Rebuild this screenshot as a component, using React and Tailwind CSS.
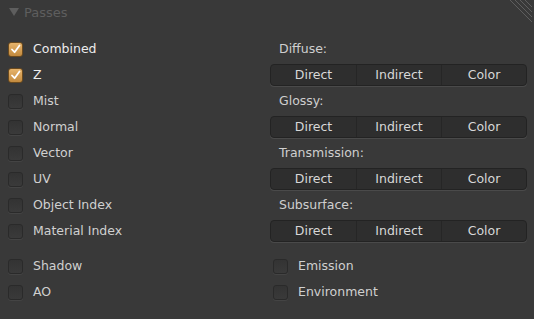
const leftTop = [
  { label: "Combined", on: true },
  { label: "Z", on: true },
  { label: "Mist" },
  { label: "Normal" },
  { label: "Vector" },
  { label: "UV" },
  { label: "Object Index" },
  { label: "Material Index" },
];

const groups = ["Diffuse:", "Glossy:", "Transmission:", "Subsurface:"];

function Check({ on }) {
  if (on) {
    return (
      <span className="flex h-[15px] w-[15px] shrink-0 items-center justify-center rounded-[3px] border border-[#6b4a1e] bg-gradient-to-b from-[#e7b46c] to-[#c28a3e]">
        <svg width="11" height="11" viewBox="0 0 11 11">
          <path d="M2 5.5 L4.6 8.2 L9.5 1.5" fill="none" stroke="#fff" strokeWidth="1.8" strokeLinecap="round" strokeLinejoin="round" />
        </svg>
      </span>
    );
  }
  return (
    <span className="h-[15px] w-[15px] shrink-0 rounded-[3px] border border-[#2a2a2a] bg-gradient-to-b from-[#333333] to-[#3a3a3a] shadow-[0_1px_0_#444]" />
  );
}

function CheckRow({ label, on }) {
  return (
    <div className="flex h-[26px] items-center gap-[10px]">
      <Check on={on} />
      <span className={on ? "text-[#ececec]" : "text-[#d0d0d0]"}>{label}</span>
    </div>
  );
}

function ButtonRow() {
  return (
    <div className="flex h-[26px] items-center">
      <div className="grid h-[22px] w-full grid-cols-3 overflow-hidden rounded-[4px] border border-[#232323] bg-[#2e2e2e] shadow-[0_1px_0_#4a4a4a]">
        {["Direct", "Indirect", "Color"].map((t, i) => (
          <div
            key={t}
            className={
              "flex items-center justify-center text-[#d8d8d8] " +
              (i > 0 ? "border-l border-[#262626]" : "")
            }
          >
            {t}
          </div>
        ))}
      </div>
    </div>
  );
}

export default function App() {
  return (
    <div className="relative h-[319px] w-[534px] overflow-hidden bg-[#393939] font-['DejaVu_Sans',sans-serif] text-[12.5px]">
      <div className="flex h-[36px] items-start gap-[5px] pl-[9px] pt-[3px] text-[13px] text-[#5e5e5e]">
        <svg width="10" height="10" viewBox="0 0 10 10" className="mt-[4px]">
          <path d="M0 1 L10 1 L5 9 Z" fill="#5e5e5e" />
        </svg>
        <span>Passes</span>
      </div>
      <svg width="26" height="22" viewBox="0 0 26 22" className="absolute right-[2px] top-0">
        <g stroke="#5e5e5e" strokeWidth="1">
          <line x1="4" y1="0" x2="26" y2="22" />
          <line x1="9" y1="0" x2="26" y2="17" />
          <line x1="14" y1="0" x2="26" y2="12" />
          <line x1="19" y1="0" x2="26" y2="7" />
        </g>
      </svg>

      <div className="grid grid-cols-[270px_257px]">
        <div className="pl-[8px]">
          {leftTop.map((r) => (
            <CheckRow key={r.label} {...r} />
          ))}
        </div>
        <div>
          {groups.map((g) => (
            <div key={g}>
              <div className="flex h-[26px] items-center pl-[9px] text-[#cfcfcf]">{g}</div>
              <ButtonRow />
            </div>
          ))}
        </div>
      </div>

      <div className="mt-[9px] grid grid-cols-[265px_257px]">
        <div className="pl-[8px]">
          <CheckRow label="Shadow" />
          <CheckRow label="AO" />
        </div>
        <div className="pl-[8px]">
          <CheckRow label="Emission" />
          <CheckRow label="Environment" />
        </div>
      </div>
    </div>
  );
}
